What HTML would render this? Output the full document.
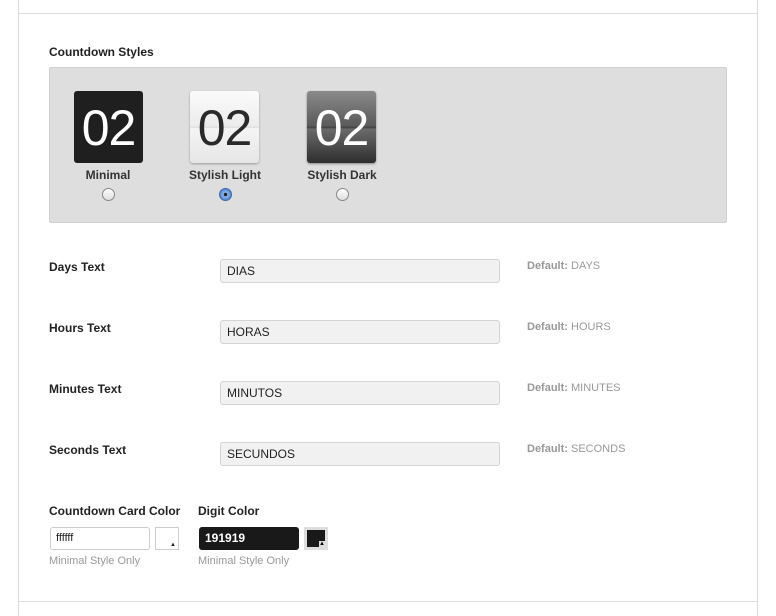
<!DOCTYPE html>
<html><head><style>
body{margin:0;width:776px;height:616px;background:#fff;font-family:"Liberation Sans",Arial,sans-serif;position:relative;overflow:hidden;color:#222}
.a{position:absolute}
.vl{position:absolute;top:0;width:1px;height:616px;background:#dcdcdc}
.hl{position:absolute;left:18px;width:740px;height:1px;background:#dcdcdc}
.lb{position:absolute;font-size:12px;font-weight:bold;color:#222}
.card{position:absolute;top:91px;width:69px;height:72px;border-radius:3px;font-size:50px;text-align:center;line-height:74px;letter-spacing:-1px}
.cl{position:absolute;top:168px;font-size:12px;font-weight:bold;color:#333;text-align:center;width:120px}
.rd{position:absolute;top:188px;width:11px;height:11px;border-radius:50%;border:1px solid #888;background:linear-gradient(#fff,#ddd)}
.in{position:absolute;left:220px;border:1px solid #d4d4d4;border-radius:3px;background:#f1f1f1;font-size:12px;line-height:22px;padding-left:6px;box-sizing:border-box;width:280px;height:24px}
.df{position:absolute;left:527px;font-size:11px;color:#999}
.df b{color:#999}
.sm{position:absolute;top:555px;font-size:11px;color:#999}
</style></head><body>
<div class="vl" style="left:18px"></div><div class="vl" style="left:757px"></div>
<div class="hl" style="top:13px"></div><div class="hl" style="top:601px"></div>
<div class="lb" style="left:49px;top:45px">Countdown Styles</div>
<div class="a" style="left:49px;top:67px;width:676px;height:154px;background:#dedede;border:1px solid #cfcfcf;border-radius:2px"></div>
<div class="card" style="left:74px;background:#1f1f1f;color:#fff">02</div>
<div class="card" style="left:190px;background:linear-gradient(#fbfbfb 0%,#ececec 49%,#d8d8d8 50%,#f4f4f4 52%,#e6e6e6 100%);color:#2a2a2a;box-shadow:0 1px 2px #999">02</div>
<div class="card" style="left:307px;background:linear-gradient(#8a8a8a 0%,#5a5a5a 49%,#3c3c3c 50%,#6a6a6a 53%,#2e2e2e 100%);color:#fff;box-shadow:0 1px 2px #888">02</div>
<div class="cl" style="left:48px">Minimal</div>
<div class="cl" style="left:165px">Stylish Light</div>
<div class="cl" style="left:282px">Stylish Dark</div>
<div class="rd" style="left:102px"></div>
<div class="rd" style="left:219px;background:radial-gradient(circle,#222 0 1.5px,#8fb6ea 2px,#4a80d0 6px);border-color:#3a68a8"></div>
<div class="rd" style="left:336px"></div>

<div class="lb" style="left:49px;top:260px">Days Text</div>
<div class="in" style="top:259px">DIAS</div><div class="df" style="top:260px"><b>Default:</b> DAYS</div>
<div class="lb" style="left:49px;top:321px">Hours Text</div>
<div class="in" style="top:320px">HORAS</div><div class="df" style="top:321px"><b>Default:</b> HOURS</div>
<div class="lb" style="left:49px;top:382px">Minutes Text</div>
<div class="in" style="top:381px">MINUTOS</div><div class="df" style="top:382px"><b>Default:</b> MINUTES</div>
<div class="lb" style="left:49px;top:443px">Seconds Text</div>
<div class="in" style="top:442px">SECUNDOS</div><div class="df" style="top:443px"><b>Default:</b> SECONDS</div>

<div class="lb" style="left:49px;top:504px">Countdown Card Color</div>
<div class="lb" style="left:198px;top:504px">Digit Color</div>
<div class="a" style="left:50px;top:527px;width:100px;height:23px;border:1px solid #ccc;border-radius:3px;box-sizing:border-box;font-size:11px;line-height:21px;padding-left:5px">ffffff</div>
<div class="a" style="left:155px;top:527px;width:24px;height:23px;border:1px solid #ccc;box-sizing:border-box;background:#fff"><span class="a" style="right:2px;bottom:1px;font-size:6px">▲</span></div>
<div class="a" style="left:199px;top:527px;width:100px;height:23px;background:#191919;border-radius:3px;color:#fff;font-size:12px;font-weight:bold;line-height:23px;padding-left:6px;box-sizing:border-box">191919</div>
<div class="a" style="left:304px;top:527px;width:24px;height:23px;border:3px solid #ddd;box-sizing:border-box;background:#191919"><span class="a" style="right:0;bottom:0;font-size:6px;background:#ddd;color:#000;line-height:6px">▲</span></div>
<div class="sm" style="left:49px">Minimal Style Only</div>
<div class="sm" style="left:198px">Minimal Style Only</div>
</body></html>
